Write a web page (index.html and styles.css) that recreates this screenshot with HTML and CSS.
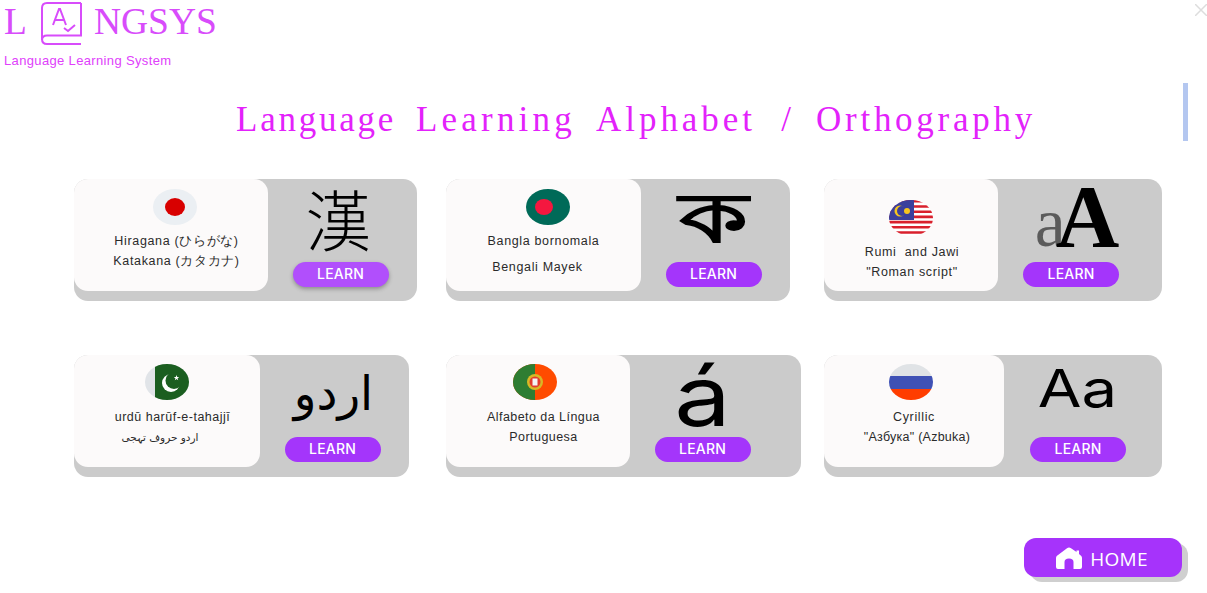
FILE: index.html
```html
<!DOCTYPE html>
<html lang="en">
<head>
<meta charset="UTF-8">
<meta name="viewport" content="width=device-width, initial-scale=1.0">
<title>Langsys</title>
<link rel="stylesheet" href="styles.css">
</head>
<body>
<header class="logo">
  <div class="logo-row">
    <span>L</span>
    <svg class="logo-book" viewBox="0 0 44 44" fill="none" stroke="#d84cfb" stroke-width="2">
      <path d="M41 1H7Q2 1 2 6V37Q2 42 7 42H41"/>
      <path d="M41 1V33.500H7Q2 33.500 2 38"/>
      <path d="M13 23L19 7H20L26 23M15 18H24"/>
      <path d="M24 26L28 29L35 23"/>
    </svg>
    <span>NGSYS</span>
  </div>
  <p class="tagline">Language Learning System</p>
</header>

<h1 class="title">
  <span class="word-language">Language</span>
  <span class="word-learning">Learning</span>
  <span class="word-alphabet">Alphabet</span>
  <span class="word-slash">/</span>
  <span class="word-ortho">Orthography</span>
</h1>

<main class="cards">
  <section class="card card-japan">
    <div class="panel">
      <svg class="flag" viewBox="0 0 44 36"><ellipse cx="22" cy="18" rx="22" ry="18" fill="#ebeff3"/><ellipse cx="22" cy="18" rx="10" ry="9" fill="#d80000"/></svg>
      <p>Hiragana (ひらがな)</p>
      <p>Katakana (カタカナ)</p>
    </div>
    <div class="side">
      <div class="glyph glyph-kanji">漢</div>
      <button class="learn learn-hover">LEARN</button>
    </div>
  </section>

  <section class="card card-bangla">
    <div class="panel">
      <svg class="flag" viewBox="0 0 44 36"><ellipse cx="22" cy="18" rx="22" ry="18" fill="#006a58"/><ellipse cx="18" cy="18" rx="9" ry="8" fill="#f4173f"/></svg>
      <p>Bangla bornomala</p>
      <p class="mayek">Bengali Mayek</p>
    </div>
    <div class="side">
      <div class="glyph glyph-bangla"><span>ক</span></div>
      <button class="learn">LEARN</button>
    </div>
  </section>

  <section class="card card-malay">
    <div class="panel">
      <svg class="flag" viewBox="0 0 44 36">
        <defs><clipPath id="oval-my"><ellipse cx="22" cy="18" rx="22" ry="18"/></clipPath></defs>
        <g clip-path="url(#oval-my)">
          <rect width="44" height="36" fill="#fff"/>
          <path d="M0 1.300H44M0 6.500H44M0 11.700H44M0 16.900H44M0 22.100H44M0 27.300H44M0 32.500H44" stroke="#d9202c" stroke-width="2.600"/>
          <rect width="25" height="20" fill="#3b3f9c"/>
          <circle cx="11" cy="11" r="5.500" fill="#f7c51e"/>
          <circle cx="13" cy="11" r="5" fill="#3b3f9c"/>
          <circle cx="18" cy="11" r="3" fill="#f7c51e"/>
        </g>
      </svg>
      <p>Rumi&nbsp; and Jawi</p>
      <p>"Roman script"</p>
    </div>
    <div class="side">
      <div class="glyph glyph-serif"><span class="big-a">A</span><span class="small-a">a</span></div>
      <button class="learn">LEARN</button>
    </div>
  </section>

  <section class="card card-urdu">
    <div class="panel">
      <svg class="flag" viewBox="0 0 44 36">
        <defs><clipPath id="oval-pk"><ellipse cx="22" cy="18" rx="22" ry="18"/></clipPath></defs>
        <g clip-path="url(#oval-pk)">
          <rect width="44" height="36" fill="#e1e4e8"/>
          <rect x="10" width="34" height="36" fill="#1b5e20"/>
          <circle cx="26" cy="19" r="9" fill="#fff"/>
          <circle cx="29" cy="16.500" r="8.500" fill="#1b5e20"/>
          <path d="M31.500 11L32.200 13H34.300L32.600 14.200L33.200 16.200L31.500 15L29.800 16.200L30.400 14.200L28.700 13H30.800Z" fill="#fff"/>
        </g>
      </svg>
      <p class="urdu-name">urdū harūf-e-tahajjī</p>
      <p class="urdu-small" dir="rtl" lang="ur">اردو حروف تہجی</p>
    </div>
    <div class="side">
      <div class="glyph glyph-urdu" dir="rtl" lang="ur">اردو</div>
      <button class="learn">LEARN</button>
    </div>
  </section>

  <section class="card card-portugal">
    <div class="panel">
      <svg class="flag" viewBox="0 0 44 36">
        <defs><clipPath id="oval-pt"><ellipse cx="22" cy="18" rx="22" ry="18"/></clipPath></defs>
        <g clip-path="url(#oval-pt)">
          <rect width="44" height="36" fill="#ff4b00"/>
          <rect width="22" height="36" fill="#2e7d32"/>
          <circle cx="22" cy="18" r="8" fill="#d8b825"/>
          <circle cx="22" cy="18" r="5.500" fill="#e23b2e"/>
          <rect x="19.500" y="14.500" width="5" height="7" fill="#f4f4f4"/>
        </g>
      </svg>
      <p class="pt-name">Alfabeto da Língua</p>
      <p class="pt-name">Portuguesa</p>
    </div>
    <div class="side">
      <div class="glyph glyph-accent"><span>á</span></div>
      <button class="learn">LEARN</button>
    </div>
  </section>

  <section class="card card-russia">
    <div class="panel">
      <svg class="flag" viewBox="0 0 44 36">
        <defs><clipPath id="oval-ru"><ellipse cx="22" cy="18" rx="22" ry="18"/></clipPath></defs>
        <g clip-path="url(#oval-ru)">
          <rect width="44" height="12" fill="#e0e3e6"/>
          <rect y="12" width="44" height="13" fill="#3f51b5"/>
          <rect y="25" width="44" height="11" fill="#ff3d00"/>
        </g>
      </svg>
      <p>Cyrillic</p>
      <p class="ru-name">"Азбука" (Azbuka)</p>
    </div>
    <div class="side">
      <div class="glyph glyph-latin"><span>Aa</span></div>
      <button class="learn">LEARN</button>
    </div>
  </section>
</main>

<footer class="footer">
  <button class="home">
    <svg class="home-icon" viewBox="0 0 26 22" fill="#fff"><path d="M13 0.500Q14 0.500 15 1.300L20.500 5V3.500H23V7L25 8.800Q26 9.700 26 11V20Q26 22 24 22H17.500V15Q17.500 11.500 13 11.500Q8.500 11.500 8.500 15V22H2Q0 22 0 20V11Q0 9.700 1 8.800L11 1.300Q12 0.500 13 0.500Z"/></svg>
    <span>HOME</span>
  </button>
</footer>

<svg class="close" viewBox="0 0 12 12" stroke="#ddd" stroke-width="1.500"><path d="M0 0L12 12M12 0L0 12"/></svg>
<div class="scroll-thumb"></div>
</body>
</html>
```

FILE: styles.css
```css
html, body {
  margin: 0;
  height: 593px;
  overflow: hidden;
}
body {
  position: relative;
  background-color: #fff;
  font-family: 'Liberation Sans', Arial, sans-serif;
}

/* logo */
.logo {
  height: 83px;
  padding-left: 4px;
  box-sizing: border-box;
  color: #d84cfb;
}
.logo-row {
  display: flex;
  align-items: flex-start;
  height: 46px;
  font-family: 'Liberation Serif', serif;
  font-size: 37.500px;
  line-height: 43px;
}
.logo-book {
  width: 44px;
  height: 44px;
  margin: 2px 10px 0 13px;
}
.tagline {
  margin: 7px 0 0;
  font-size: 13px;
  line-height: 15px;
  letter-spacing: 0.350px;
  color: #e040fb;
}

/* the title letters sit on an even 20px pitch, so each word gets its own spacing */
.title {
  display: flex;
  gap: 20px;
  margin: 0;
  padding-left: 236px;
  height: 96px;
  padding-top: 16px;
  box-sizing: border-box;
  font-family: 'Liberation Serif', serif;
  font-size: 35px;
  font-weight: normal;
  line-height: 42px;
  color: #e322fb;
}
.word-language { width: 160px; letter-spacing: 2.750px; }
.word-learning { width: 160px; letter-spacing: 4.200px; }
.word-alphabet { width: 160px; letter-spacing: 3.960px; }
.word-slash { width: 20px; text-align: center; }
.word-ortho { width: 220px; letter-spacing: 3.740px; }

/* cards */
.cards {
  display: grid;
  grid-template-columns: 372px 378px 338px;
  grid-auto-rows: 122px;
  row-gap: 54px;
  padding-left: 74px;
}
.card {
  display: flex;
  align-items: flex-start;
  height: 122px;
  background-color: #cbcbcb;
  border-radius: 14px;
}
.panel {
  display: flex;
  flex-direction: column;
  align-items: center;
  box-sizing: border-box;
  height: 112px;
  padding-top: 10px;
  background-color: #fcfafa;
  border-radius: 14px;
  font-size: 12.500px;
  letter-spacing: 0.650px;
  color: #2a2a2a;
}
.panel p {
  margin: 0;
  height: 20px;
  line-height: 20px;
}
.flag {
  display: block;
  flex: none;
  width: 44px;
  height: 36px;
  margin-bottom: 6px;
}
.side {
  flex: 1;
  display: flex;
  flex-direction: column;
  align-items: center;
}
.glyph {
  display: flex;
  align-items: center;
  justify-content: center;
  box-sizing: border-box;
  height: 83px;
  color: #000;
}
.learn {
  width: 96px;
  height: 25px;
  padding: 0 0 3px;
  background-color: #a435fb;
  border: none;
  border-radius: 13px;
  color: #fff;
  font-family: Inter, sans-serif;
  font-size: 14px;
  font-weight: 500;
  letter-spacing: 0.200px;
  cursor: pointer;
}
.learn-hover {
  background-color: #b14ffc;
  box-shadow: 0 2px 4px rgba(0, 0, 0, 0.3);
}

/* each card has its own widths in the original */
.card-japan { width: 343px; }
.card-japan .panel { width: 194px; }
.card-japan .flag { margin-left: 8px; }
.card-japan p { padding-left: 11px; }
.card-japan .side { padding-right: 4px; }
.card-bangla { width: 344px; }
.card-bangla .panel { width: 195px; }
.card-bangla .flag { margin-left: 8px; }
.card-bangla .mayek { margin-top: 6px; padding-right: 12px; }
.card-bangla .side { padding-right: 4px; }
.card-malay { width: 338px; }
.card-malay .panel { width: 174px; padding-top: 21px; }
.card-malay p { padding-left: 2px; }
.card-malay .side { padding-right: 18px; }
.card-urdu { width: 335px; }
.card-urdu .panel { width: 186px; padding-top: 9px; }
.card-urdu .flag { margin-bottom: 7px; }
.card-urdu .urdu-name { padding-left: 11px; letter-spacing: 0.500px; }
.card-urdu .urdu-small { padding-right: 14px; font-family: 'DejaVu Sans', sans-serif; font-size: 10.500px; letter-spacing: 0; }
.card-urdu .side { padding-right: 4px; }
.card-portugal { width: 355px; }
.card-portugal .panel { width: 184px; padding-top: 9px; }
.card-portugal .flag { margin-bottom: 7px; margin-right: 6px; }
.card-portugal .pt-name { padding-left: 11px; letter-spacing: 0.450px; }
.card-portugal .side { padding-right: 26px; }
.card-russia { width: 338px; }
.card-russia .panel { width: 180px; padding-top: 9px; }
.card-russia .flag { margin-bottom: 7px; margin-right: 6px; }
.card-russia .ru-name { padding-left: 6px; letter-spacing: 0.250px; }
.card-russia .side { padding-right: 10px; }
.card-urdu .glyph, .card-portugal .glyph, .card-russia .glyph { height: 82px; }

/* big sample letters */
.glyph-kanji {
  padding: 0 4px 8px 0;
  font-family: 'Noto Sans CJK TC', sans-serif;
  font-size: 66px;
  font-weight: 300;
  line-height: 70px;
}
.glyph-bangla {
  padding-bottom: 10px;
  font-family: 'Noto Sans', 'DejaVu Sans', sans-serif;
  font-size: 82px;
  font-weight: bold;
  line-height: 83px;
}
.glyph-bangla span {
  transform: scale(1.200, 0.850);
}
.glyph-serif {
  align-items: baseline;
  flex-direction: row-reverse;
  padding-left: 12px;
  font-family: 'Liberation Serif', serif;
  line-height: 76px;
}
.small-a {
  margin-right: -10px;
  color: rgba(0, 0, 0, 0.55);
  font-size: 70px;
}
.big-a {
  font-size: 88px;
  font-weight: bold;
}
.glyph-urdu {
  padding: 0 0 6px 2px;
  font-family: 'DejaVu Sans', sans-serif;
  font-size: 47px;
}
.glyph-accent {
  font-family: Inter, sans-serif;
  font-size: 84px;
  font-weight: 400;
  line-height: 82px;
}
.glyph-accent span {
  transform: scaleX(1.200);
}
.glyph-latin {
  padding-bottom: 16px;
  font-family: Inter, sans-serif;
  font-size: 52px;
  font-weight: 400;
}
.glyph-latin span {
  transform: scaleX(1.220);
}

/* home button */
.footer {
  display: flex;
  justify-content: flex-end;
  padding: 61px 25px 0 0;
}
.home {
  display: flex;
  align-items: center;
  justify-content: center;
  gap: 8px;
  width: 158px;
  height: 39px;
  padding: 3px 2px 0 0;
  background-color: #a633fb;
  border: none;
  border-radius: 12px;
  box-shadow: 6px 5px 0 #cfcfcf;
  color: #fff;
  font-family: 'Open Sans', sans-serif;
  font-size: 19px;
  font-weight: 500;
  letter-spacing: 0.300px;
  cursor: pointer;
}
.home-icon {
  width: 26px;
  height: 22px;
  margin-bottom: 2px;
}

/* window bits lying over the page */
.close {
  position: absolute;
  top: 4px;
  right: 0;
  width: 12px;
  height: 12px;
}
.scroll-thumb {
  position: absolute;
  top: 83px;
  left: 1183px;
  width: 5px;
  height: 58px;
  background-color: #b4c7f0;
}
```
